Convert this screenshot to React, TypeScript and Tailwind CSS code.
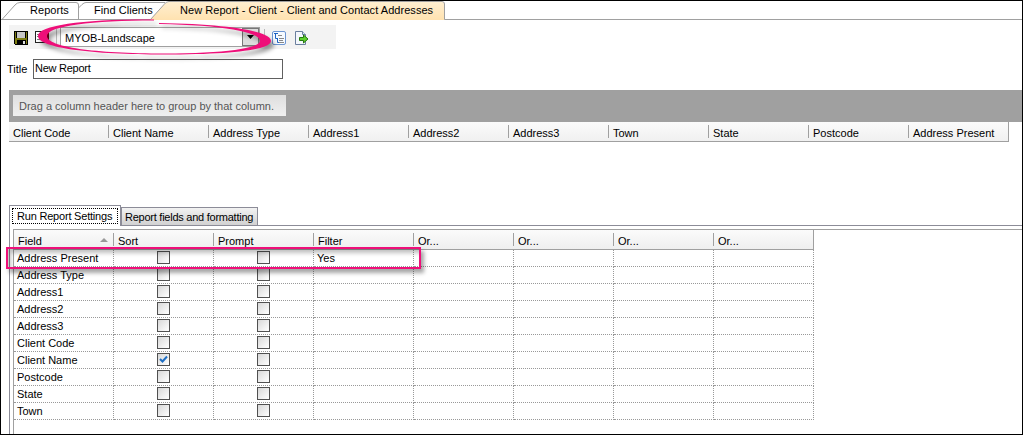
const REPORT_COLUMNS = [
  'Client Code',
  'Client Name',
  'Address Type',
  'Address1',
  'Address2',
  'Address3',
  'Town',
  'State',
  'Postcode',
  'Address Present',
];

const SETTING_COLUMNS = ['Field', 'Sort', 'Prompt', 'Filter', 'Or...', 'Or...', 'Or...', 'Or...'];

type Setting = { field: string; sort?: boolean; prompt?: boolean; filter?: string };

const SETTINGS: Setting[] = [
  { field: 'Address Present', filter: 'Yes' },
  { field: 'Address Type' },
  { field: 'Address1' },
  { field: 'Address2' },
  { field: 'Address3' },
  { field: 'Client Code' },
  { field: 'Client Name', sort: true },
  { field: 'Postcode' },
  { field: 'State' },
  { field: 'Town' },
];

function SaveIcon() {
  return (
    <svg width="14" height="14" viewBox="0 0 14 14" shapeRendering="crispEdges">
      <path d="M0 0h14v14H1l-1-1z" fill="#000" />
      <path d="M1 1h12v12H1z" fill="#7c7c10" />
      <path d="M2 0h10v7H2z" fill="#000" />
      <path d="M3 1h8v6H3z" fill="#c6c6c6" />
      <path d="M3 9h9v4H3z" fill="#000" />
      <path d="M9 10h2v3H9z" fill="#e0e0e0" />
    </svg>
  );
}

function DeleteReportIcon() {
  return (
    <svg width="14" height="13" viewBox="0 0 14 13" shapeRendering="crispEdges">
      <path d="M.5.5h13v11H.5z" fill="#fff" stroke="#222" />
      <path d="M2 3.500h7M2 5.500h7M2 8.500h7" stroke="#777" />
      <path d="M10 1h4v7h-2v-1h-2z" fill="#8b0018" />
    </svg>
  );
}

function TreeIcon() {
  return (
    <svg width="14" height="14" viewBox="0 0 14 14">
      <rect x=".5" y=".5" width="13" height="13" rx="1.500" fill="#f6faff" stroke="#6c95d2" />
      <path d="M2 2.500h4M3.500 3v4.500H6M5.500 7v4.500H7" fill="none" stroke="#1d63c4" />
      <path d="M6 4.500h4M7 7.500h5M7 9.500h4M7 11.500h5" stroke="#888" />
    </svg>
  );
}

function ExportIcon() {
  return (
    <svg width="14" height="14" viewBox="0 0 14 14">
      <path d="M.5.500h7l3 3v10H.5z" fill="#f4f7fc" stroke="#6b7f9e" />
      <path d="M7.500.500v3h3" fill="#dbe6f5" stroke="#6b7f9e" />
      <path d="M4.500 6.500h4v-2.500l4.500 4-4.500 4V9.500h-4z" fill="#5fd02c" stroke="#25780f" />
    </svg>
  );
}

function DocumentTabs() {
  return (
    <nav className="relative h-[19px] shrink-0">
      <svg className="absolute top-0 left-0" width="1021" height="19" viewBox="1 1 1021 19">
        <defs>
          <linearGradient id="active-tab" x1="0" y1="0" x2="0" y2="1">
            <stop offset="0" stopColor="#ffefd0" />
            <stop offset="1" stopColor="#ffe2b0" />
          </linearGradient>
        </defs>
        <path d="M1 19.500H151M444 19.500H1022" stroke="#a0a0a0" />
        <path d="M2 19.500L15 5Q17 2.500 20 2.500H76Q78.500 2.500 78.500 5V19" fill="none" stroke="#a0a0a0" />
        <path d="M78.500 8L82 4.500Q84 2.500 86 2.500H165" fill="none" stroke="#a0a0a0" />
        <path d="M150 20L164 4.500Q166 2 169 2H442Q444.500 2 444.500 5V20z" fill="url(#active-tab)" />
        <path d="M150.500 19.500L164 4.500Q166 1.500 169 1.500H442Q444.500 1.500 444.500 4V19.500" fill="none" stroke="#a0a0a0" />
      </svg>
      <div className="relative flex pt-0.5 leading-[15px] tracking-[0.05px]">
        <span className="ml-[29px] w-16">Reports</span>
        <span className="w-[86px]">Find Clients</span>
        <span>New Report - Client - Client and Contact Addresses</span>
      </div>
    </nav>
  );
}

function Toolbar() {
  return (
    <div className="mt-[5px] ml-2 flex h-6 w-[327px] items-center bg-[#f3f3f3] pl-[5px]">
      <span className="mt-0.5">
        <SaveIcon />
      </span>
      <span className="ml-[7px]">
        <DeleteReportIcon />
      </span>
      <span className="ml-[7px] h-4 w-px bg-[#b8b8b8]" />
      <div className="ml-[3px] flex h-5 w-[200px] items-center border border-[#a0a0a0] bg-white pl-1">
        <span className="mt-0.5 flex-1">MYOB-Landscape</span>
        <span className="flex h-[18px] w-[17px] items-center justify-center border border-[#777] bg-[#dcdcdc]">
          <svg width="7" height="4" viewBox="0 0 7 4">
            <path d="M0 0h7L3.500 4z" />
          </svg>
        </span>
      </div>
      <span className="ml-1 h-4 w-px bg-[#b8b8b8]" />
      <span className="mt-0.5 ml-[7px]">
        <TreeIcon />
      </span>
      <span className="mt-0.5 ml-[9px]">
        <ExportIcon />
      </span>
    </div>
  );
}

function ReportPreview() {
  return (
    <section className="mt-[11px] ml-2">
      <div className="h-8 bg-[#a0a0a0] pt-[5px] pl-1">
        <div className="h-[21px] w-[273px] bg-gradient-to-b from-[#dedede] to-[#f0f0f0] pl-1.5 leading-[22px] text-[#555]">
          Drag a column header here to group by that column.
        </div>
      </div>
      <div className="flex h-5 w-[1000px] border-r border-b border-[#a0a0a0] bg-gradient-to-b from-[#fbfbfb] to-[#f0f0f0]">
        {REPORT_COLUMNS.map((name) => (
          <div key={name} className="group flex w-[100px] shrink-0 pl-1 leading-[22px]">
            <span className="flex-1">{name}</span>
            <span className="mt-[3px] h-[13px] w-px bg-[#a0a0a0] group-last:hidden" />
          </div>
        ))}
      </div>
    </section>
  );
}

function CheckBox({ checked }: { checked?: boolean }) {
  return (
    <span className="flex size-[13px] items-center justify-center border border-[#505050] bg-gradient-to-br from-[#d8d8d8] to-white">
      {checked && (
        <svg width="9" height="9" viewBox="0 0 9 9">
          <path d="M1 4l2.500 2.500L8 1.500" fill="none" stroke="#1e6fc4" strokeWidth="2" />
        </svg>
      )}
    </span>
  );
}

function SettingsHeader() {
  return (
    <div className="flex h-5 w-[800px] border-r border-b border-[#a0a0a0] bg-gradient-to-b from-[#fbfbfb] to-[#efefef]">
      {SETTING_COLUMNS.map((name, i) => (
        <div key={i} className="group flex w-[100px] shrink-0 pl-1 leading-[22px]">
          <span className="flex-1">{name}</span>
          {i === 0 && (
            <svg className="mt-2 mr-[5px]" width="8" height="4" viewBox="0 0 8 4">
              <path d="M4 0l4 4H0z" fill="#999" />
            </svg>
          )}
          <span className="mt-[3px] h-[13px] w-px bg-[#a0a0a0] group-last:hidden" />
        </div>
      ))}
    </div>
  );
}

function SettingsRow({ row }: { row: Setting }) {
  const cell = 'h-[17px] w-[100px] border-r border-b border-dotted border-[#999]';
  return (
    <div className="flex leading-[17px]">
      <div className={`${cell} pl-[3px]`}>{row.field}</div>
      <div className={`${cell} flex justify-center pt-px`}>
        <CheckBox checked={row.sort} />
      </div>
      <div className={`${cell} flex justify-center pt-px`}>
        <CheckBox checked={row.prompt} />
      </div>
      <div className={`${cell} pl-[3px]`}>{row.filter}</div>
      <div className={cell} />
      <div className={cell} />
      <div className={cell} />
      <div className={cell} />
    </div>
  );
}

function ReportSettings() {
  return (
    <section className="mt-[63px] ml-2 flex flex-1 flex-col">
      <div className="flex h-5 items-end">
        <div className="relative z-10 -mb-px h-[21px] w-28 border border-b-0 border-[#8c8c98] bg-white p-0.5">
          <div className="h-[16px] border border-dotted border-black pl-1 leading-[14px] tracking-[-0.2px]">
            Run Report Settings
          </div>
        </div>
        <div className="h-[18px] w-[137px] border border-b-0 border-[#8c8c98] bg-gradient-to-b from-[#f2f2f2] to-[#d2d2d2] pl-[3px] leading-[19px] tracking-[-0.25px]">
          Report fields and formatting
        </div>
      </div>
      <div className="flex-1 border-t border-l border-[#8c8c98] pt-[3px] pl-[3px]">
        <div className="h-full border-t border-l border-[#a0a0a0]">
          <SettingsHeader />
          {SETTINGS.map((row) => (
            <SettingsRow key={row.field} row={row} />
          ))}
        </div>
      </div>
    </section>
  );
}

function Highlights() {
  return (
    <>
      <svg
        className="pointer-events-none absolute top-[10px] left-[25px] drop-shadow-[3px_4px_2px_rgba(0,0,0,0.4)]"
        width="260"
        height="60"
        viewBox="26 11 260 60"
      >
        <path
          d="M154 19.500C85 19 38 25 38 36C38 48 92 54.500 164 54.500C230 54.500 271 50 271 41C271 31 226 24 159 23V24C222 25 260 32 260 41C260 48 225 53.500 164 53.500C95 53.500 47 47 47 36C47 26 93 20.500 154 20.500Z"
          fill="#ee0f79"
        />
      </svg>
      <div className="pointer-events-none absolute top-[246px] left-[5px] h-[22px] w-[415px] border-2 border-[#ee0f79] shadow-[3px_4px_4px_rgba(0,0,0,0.35),inset_3px_4px_4px_rgba(0,0,0,0.25)]" />
    </>
  );
}

export default function App() {
  return (
    <div className="relative flex h-[435px] w-[1023px] flex-col overflow-hidden border border-black bg-white font-['Liberation_Sans',Arial,sans-serif] text-[11px] whitespace-nowrap text-black">
      <DocumentTabs />
      <Toolbar />
      <div className="mt-[10px] ml-1.5 flex h-5 items-center">
        <label className="w-[26px]">Title</label>
        <input
          className="h-5 w-[250px] border border-[#606060] bg-white pb-0.5 pl-px tracking-[-0.25px] outline-none"
          defaultValue="New Report"
        />
      </div>
      <ReportPreview />
      <ReportSettings />
      <Highlights />
    </div>
  );
}
